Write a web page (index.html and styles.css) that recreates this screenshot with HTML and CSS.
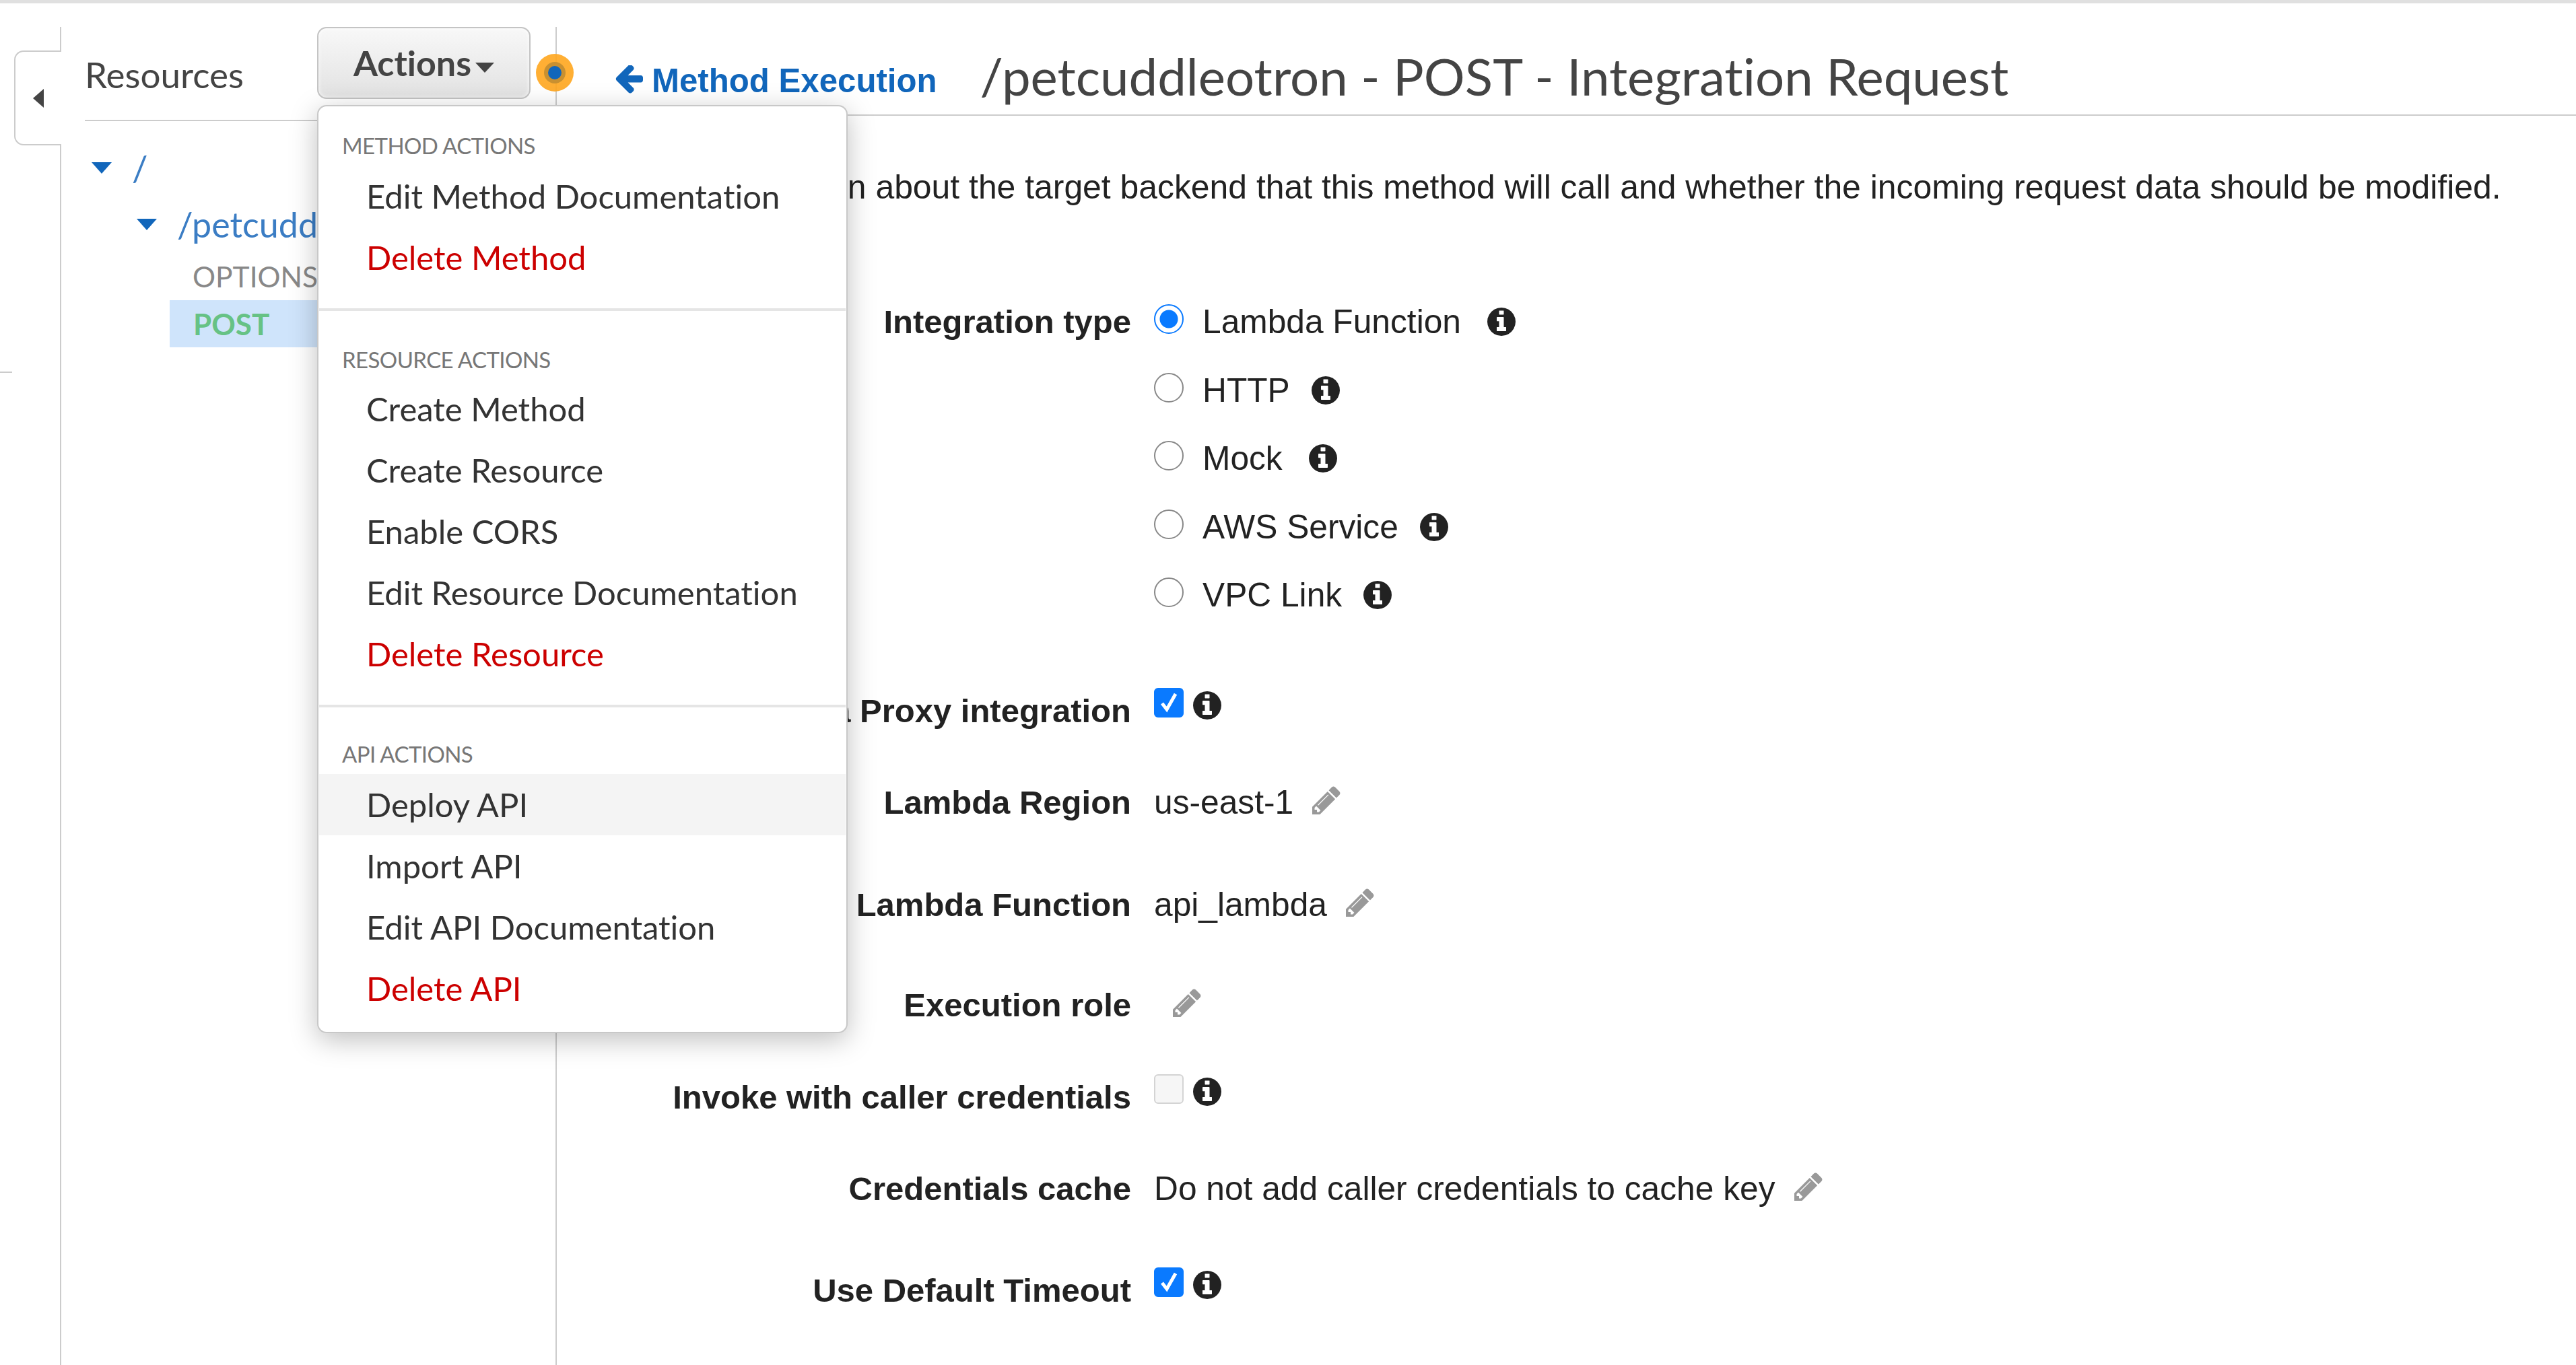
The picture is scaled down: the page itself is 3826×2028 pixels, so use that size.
FILE: index.html
```html
<!DOCTYPE html>
<html lang="en">
<head>
<meta charset="utf-8">
<title>Integration Request</title>
<link rel="stylesheet" href="styles.css">
</head>
<body>
<svg class="defs" width="0" height="0" aria-hidden="true">
  <symbol id="info" viewBox="0 0 1536 1536"><path d="M1024 1248v-160q0-14-9-23t-23-9h-96v-512q0-14-9-23t-23-9h-320q-14 0-23 9t-9 23v160q0 14 9 23t23 9h96v320h-96q-14 0-23 9t-9 23v160q0 14 9 23t23 9h448q14 0 23-9t9-23zm-128-896v-160q0-14-9-23t-23-9h-192q-14 0-23 9t-9 23v160q0 14 9 23t23 9h192q14 0 23-9t9-23zm640 416q0 209-103 385.5t-279.5 279.5-385.5 103-385.5-103-279.5-279.5-103-385.5 103-385.5 279.5-279.5 385.5-103 385.5 103 279.5 279.5 103 385.5z"/></symbol>
  <symbol id="pencil" viewBox="0 0 1536 1536"><path d="M363 1408l91-91-235-235-91 91v107h128v128h107zm523-928q0-22-22-22-10 0-17 7l-542 542q-7 7-7 17 0 22 22 22 10 0 17-7l542-542q7-7 7-17zm-54-192l416 416-832 832h-416v-416zm683 96q0 53-37 90l-166 166-416-416 166-165q36-38 90-38 53 0 91 38l235 234q37 39 37 91z"/></symbol>
  <symbol id="check" viewBox="0 0 44 44"><path d="M12 23l7 9L32 9" fill="none" stroke="#fff" stroke-width="5"/></symbol>
</svg>
<div class="topbar"></div>
<div class="layout">
  <div class="collapse-col">
    <div class="collapse-tab"><span class="collapse-arrow"></span></div>
    <div class="collapse-tick"></div>
  </div>
  <aside class="sidebar">
    <div class="sidebar-head">
      <span class="sidebar-title">Resources</span>
      <button class="actions-btn">Actions<span class="caret"></span></button>
    </div>
    <ul class="tree">
      <li class="tree-node tree-root"><span class="tree-tri"></span><span class="tree-link">/</span></li>
      <li class="tree-node tree-child"><span class="tree-tri"></span><span class="tree-link">/petcuddleotron</span></li>
      <li class="tree-method">OPTIONS</li>
      <li class="tree-method tree-method-active">POST</li>
    </ul>
  </aside>
  <main class="main">
    <header class="title-row">
      <a class="back-link"><svg class="back-icon" viewBox="0 0 1536 1536"><path d="M1536 768v128q0 53-32.5 90.5t-84.5 37.5h-704l293 294q38 36 38 90t-38 90l-75 76q-37 37-90 37-52 0-91-37l-651-652q-37-37-37-90 0-52 37-91l651-650q38-38 91-38 52 0 90 38l75 74q38 38 38 91t-38 91l-293 293h704q52 0 84.5 37.5t32.5 90.5z" transform="translate(0 -128)"/></svg>Method Execution</a>
      <h1 class="page-title">/petcuddleotron - POST - Integration Request</h1>
    </header>
    <p class="intro">Provide information about the target backend that this method will call and whether the incoming request data should be modified.</p>
    <form class="form">
      <div class="row row-first">
        <div class="label">Integration type</div>
        <div class="value"><span class="radio radio-on"></span><span class="opt">Lambda Function</span><svg class="info info-opt"><use href="#info"/></svg></div>
      </div>
      <div class="row row-radio">
        <div class="label"></div>
        <div class="value"><span class="radio"></span><span class="opt opt-tight">HTTP</span><svg class="info info-opt"><use href="#info"/></svg></div>
      </div>
      <div class="row row-radio">
        <div class="label"></div>
        <div class="value"><span class="radio"></span><span class="opt">Mock</span><svg class="info info-opt"><use href="#info"/></svg></div>
      </div>
      <div class="row row-radio">
        <div class="label"></div>
        <div class="value"><span class="radio"></span><span class="opt opt-tight">AWS Service</span><svg class="info info-opt"><use href="#info"/></svg></div>
      </div>
      <div class="row row-radio">
        <div class="label"></div>
        <div class="value"><span class="radio"></span><span class="opt opt-tight">VPC Link</span><svg class="info info-opt"><use href="#info"/></svg></div>
      </div>
      <div class="row row-proxy">
        <div class="label">Use Lambda Proxy integration</div>
        <div class="value"><span class="check check-on"><svg class="check-mark"><use href="#check"/></svg></span><svg class="info info-check"><use href="#info"/></svg></div>
      </div>
      <div class="row row-region">
        <div class="label">Lambda Region</div>
        <div class="value"><span class="text-val">us-east-1</span><svg class="pencil"><use href="#pencil"/></svg></div>
      </div>
      <div class="row row-function">
        <div class="label">Lambda Function</div>
        <div class="value"><span class="text-val">api_lambda</span><svg class="pencil"><use href="#pencil"/></svg></div>
      </div>
      <div class="row row-role">
        <div class="label">Execution role</div>
        <div class="value"><svg class="pencil pencil-solo"><use href="#pencil"/></svg></div>
      </div>
      <div class="row row-invoke">
        <div class="label">Invoke with caller credentials</div>
        <div class="value"><span class="check"></span><svg class="info info-check"><use href="#info"/></svg></div>
      </div>
      <div class="row row-cache">
        <div class="label">Credentials cache</div>
        <div class="value"><span class="text-val">Do not add caller credentials to cache key</span><svg class="pencil"><use href="#pencil"/></svg></div>
      </div>
      <div class="row row-timeout">
        <div class="label">Use Default Timeout</div>
        <div class="value"><span class="check check-on"><svg class="check-mark"><use href="#check"/></svg></span><svg class="info info-check"><use href="#info"/></svg></div>
      </div>
    </form>
  </main>
  <div class="status-dot"><span class="status-mid"><span class="status-core"></span></span></div>
  <nav class="menu">
    <div class="menu-head">METHOD ACTIONS</div>
    <a class="menu-item">Edit Method Documentation</a>
    <a class="menu-item menu-danger">Delete Method</a>
    <div class="menu-sep"></div>
    <div class="menu-head menu-head-tight">RESOURCE ACTIONS</div>
    <a class="menu-item">Create Method</a>
    <a class="menu-item">Create Resource</a>
    <a class="menu-item">Enable CORS</a>
    <a class="menu-item">Edit Resource Documentation</a>
    <a class="menu-item menu-danger">Delete Resource</a>
    <div class="menu-sep menu-sep-last"></div>
    <div class="menu-head">API ACTIONS</div>
    <a class="menu-item menu-hover">Deploy API</a>
    <a class="menu-item">Import API</a>
    <a class="menu-item">Edit API Documentation</a>
    <a class="menu-item menu-danger">Delete API</a>
  </nav>
</div>
</body>
</html>
```
FILE: styles.css
```css
* { box-sizing: border-box; }
html, body { margin: 0; height: 100%; overflow: hidden; background: #fff; }
body { font-family: "Liberation Sans", Arial, sans-serif; color: #222; font-variant-ligatures: none; }
.defs { position: absolute; }

.topbar { height: 5px; background: #e0e0e0; }

.layout { position: relative; display: flex; height: calc(100vh - 5px); padding-top: 35px; }

.collapse-col { width: 89px; flex: none; position: relative; z-index: 1; }
.collapse-tab {
  width: 70px; height: 141px; margin: 35px -2px 0 21px;
  background: #fff; border: 2px solid #ccc; border-right: 0;
  border-radius: 14px 0 0 14px;
  display: flex; align-items: center; padding-left: 26px;
}
.collapse-arrow {
  width: 0; height: 0;
  border-top: 14px solid transparent; border-bottom: 14px solid transparent;
  border-right: 16px solid #444;
}
.collapse-tick { width: 18px; height: 2px; background: #ccc; margin-top: 336px; }

.sidebar { width: 736px; flex: none; border-left: 2px solid #ccc; padding-left: 35px; font-family: Lato, sans-serif; }
.sidebar-head { height: 140px; display: flex; align-items: flex-start; justify-content: space-between; padding-right: 37px; border-bottom: 2px solid #ccc; }
.sidebar-title { font-size: 53px; line-height: 60px; color: #444; margin-top: 41px; }
.actions-btn {
  width: 317px; height: 107px; padding: 0 0 2px; margin: 0;
  font: bold 52px/1 Lato, sans-serif; color: #444; font-variant-ligatures: none;
  background: linear-gradient(#f8f8f8, #e2e2e2);
  border: 2px solid #c4c4c4; border-radius: 14px;
  box-shadow: inset 0 0 6px rgba(255,255,255,.9);
}
.caret {
  display: inline-block; margin-left: 6px; vertical-align: 5px;
  border-left: 14px solid transparent; border-right: 14px solid transparent;
  border-top: 15px solid #444;
}

.tree { list-style: none; margin: 0; padding: 34px 0 0; }
.tree-node { display: flex; align-items: center; height: 70px; font-size: 52px; }
.tree-root { padding-left: 10px; }
.tree-child { padding-left: 77px; margin-top: 14px; }
.tree-tri {
  width: 0; height: 0; margin-right: 30px; flex: none;
  border-left: 15px solid transparent; border-right: 15px solid transparent;
  border-top: 17px solid #1166bb;
}
.tree-link { color: #3b7dc4; }
.tree-method { height: 70px; line-height: 70px; padding-left: 160px; font-size: 42.5px; color: #888; }
.tree-method-active { margin-left: 126px; padding-left: 35px; background: #cfe4fb; color: #66c285; font-size: 44px; font-weight: 700; }
.tree-node + .tree-method { margin-top: 8px; }

.main { flex: 1; min-width: 0; border-left: 2px solid #ccc; }
.title-row { height: 132px; display: flex; align-items: center; padding: 16px 0 0 86px; border-bottom: 2px solid #ccc; }
.back-link { display: flex; align-items: center; font-weight: 700; font-size: 49.2px; color: #1166bb; white-space: nowrap; margin: 12px 64px 0 0; }
.back-icon { width: 42px; height: 44px; fill: #1166bb; margin-right: 13px; }
.page-title { margin: 0; font: 400 76.2px/1 Lato, sans-serif; color: #444; white-space: nowrap; font-variant-ligatures: none; }

.intro { margin: 76px 0 0 30px; font-size: 49.87px; line-height: 60px; white-space: nowrap; }

.form { padding-top: 140px; }
.row { display: grid; grid-template-columns: 853px 1fr; column-gap: 34px; height: 60px; line-height: 60px; font-size: 49.7px; }
.label { font-size: 49px; font-weight: 700; text-align: right; white-space: nowrap; }
.value { display: flex; align-items: center; white-space: nowrap; }
.row-radio { margin-top: 41.5px; }
.row-proxy { margin-top: 112px; }
.row-region { margin-top: 76px; }
.row-function { margin-top: 92px; }
.row-role { margin-top: 89px; }
.row-invoke { margin-top: 77px; }
.row-cache { margin-top: 76px; }
.row-timeout { margin-top: 91px; }

.radio { width: 44px; height: 44px; flex: none; border-radius: 50%; border: 2px solid #888; margin: 0 28px 8px 0; background: #fff; }
.radio-on { border-color: #0a7aff; background: radial-gradient(circle, #0a7aff 0 13px, #fff 14px); }
.opt { margin-right: 39px; }
.opt-tight { margin-right: 32px; }

.check { width: 44px; height: 44px; flex: none; border-radius: 6px; background: #f6f6f6; border: 2px solid #d4d4d4; margin: -24px 14px 0 0; }
.check-on { background: #0a7aff; border-color: #0a7aff; }
.check-mark { display: block; width: 44px; height: 44px; margin: -2px; }

.info { width: 42px; height: 42px; flex: none; fill: #222; }
.info-check { margin-top: -16px; }

.text-val { margin-right: 28px; }
.pencil { width: 42px; height: 42px; flex: none; fill: #999; margin-bottom: 6px; }
.pencil-solo { margin-left: 28px; }

.status-dot {
  position: absolute; left: 796px; top: 75px; width: 56px; height: 56px; border-radius: 50%;
  background: rgba(255, 166, 30, .9);
  display: flex; align-items: center; justify-content: center;
}
.status-mid { width: 32px; height: 32px; border-radius: 50%; background: #c99030; display: flex; align-items: center; justify-content: center; }
.status-core { width: 20px; height: 20px; border-radius: 50%; background: #1166bb; }

.menu {
  position: absolute; left: 471px; top: 151px; width: 788px; height: 1379px;
  background: #fff; border: 2px solid #c8c8c8; border-radius: 14px;
  padding: 38px 1px 0;
  font-family: Lato, sans-serif;
  box-shadow: 0 10px 40px rgba(0, 0, 0, .25);
  z-index: 2;
}
.menu-head { height: 40px; line-height: 40px; padding-left: 34px; margin-bottom: 10px; font-size: 33px; letter-spacing: -0.6px; color: #777; white-space: nowrap; }
.menu-head-tight { margin-bottom: 8px; }
.menu-item { display: block; height: 91px; line-height: 91px; padding-left: 70px; font-size: 49px; color: #333; white-space: nowrap; }
.menu-danger { color: #c00; }
.menu-hover { background: #f4f4f4; }
.menu-sep { height: 4px; background: #e5e5e5; margin: 30px 0 52px; }
.menu-sep-last { margin-bottom: 49px; }
```
